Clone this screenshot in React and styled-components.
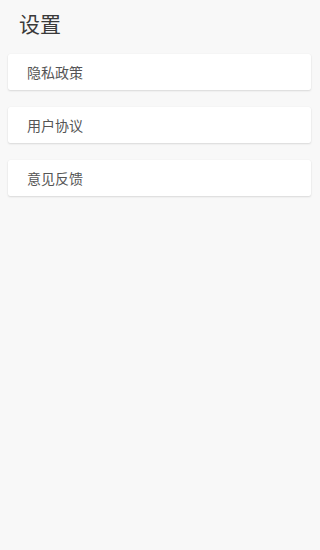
import React from "react";
import styled, { createGlobalStyle } from "styled-components";

const Global = createGlobalStyle`
  html, body { margin: 0; padding: 0; background: #f8f8f8; }
  body { font-family: "Noto Sans CJK SC", "Noto Sans", sans-serif; }
`;

const Page = styled.div`
  min-height: 550px;
  background: #f8f8f8;
  padding: 0 9px 0 8px;
  box-sizing: border-box;
`;

const Title = styled.h1`
  margin: 0;
  padding: 7px 0 0 11px;
  height: 54px;
  box-sizing: border-box;
  font-size: 21px;
  line-height: 32px;
  font-weight: 400;
  color: #3a3a3a;
`;

const List = styled.div`
  display: flex;
  flex-direction: column;
  gap: 17px;
`;

const Item = styled.div`
  height: 36px;
  background: #fff;
  border-radius: 2px;
  box-shadow: 0 1px 2px rgba(0, 0, 0, 0.12), 0 0 1px rgba(0, 0, 0, 0.08);
  display: flex;
  align-items: center;
  padding-left: 19px;
  font-size: 14px;
  color: #555;
`;

const items = ["隐私政策", "用户协议", "意见反馈"];

export default function App() {
  return (
    <>
      <Global />
      <Page>
        <Title>设置</Title>
        <List>
          {items.map((t) => (
            <Item key={t}>{t}</Item>
          ))}
        </List>
      </Page>
    </>
  );
}
